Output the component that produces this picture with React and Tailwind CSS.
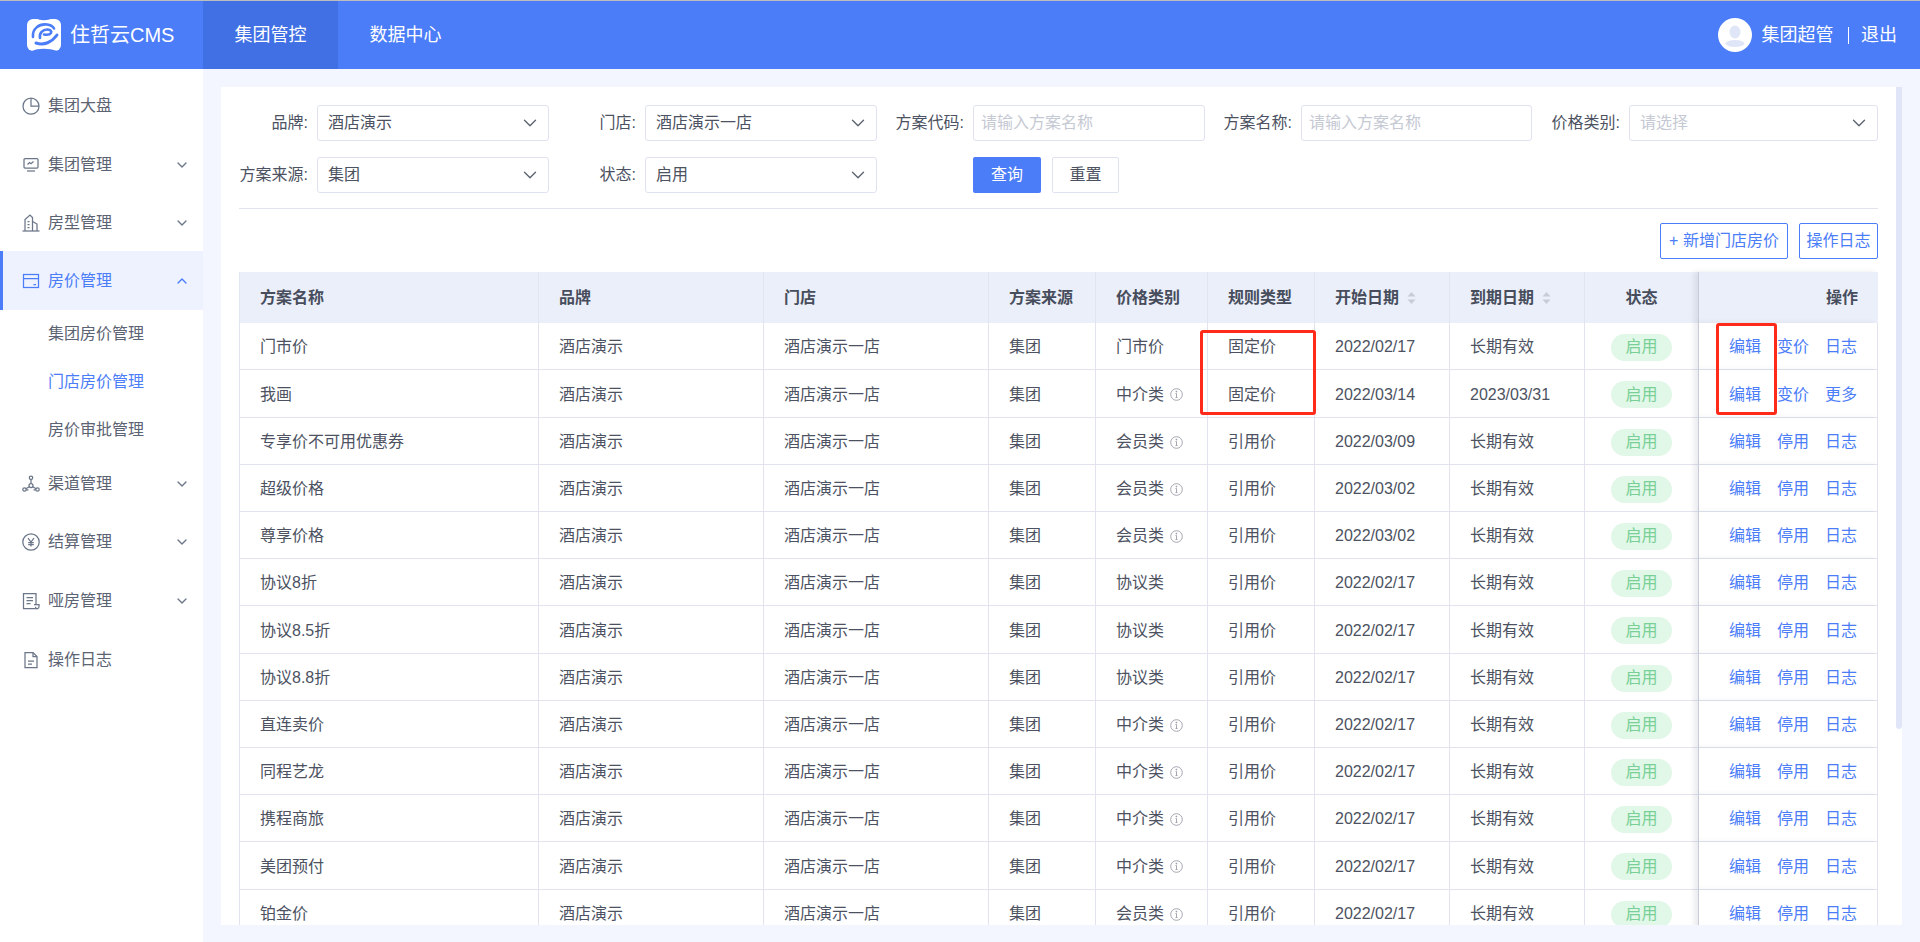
import React from 'react';
import { ChevronDown, ChevronUp } from 'lucide-react';

const rows = [
  { name: '门市价', type: '门市价', rule: '固定价', start: '2022/02/17', end: '长期有效', ops: ['编辑', '变价', '日志'] },
  { name: '我画', type: '中介类', info: true, rule: '固定价', start: '2022/03/14', end: '2023/03/31', ops: ['编辑', '变价', '更多'] },
  { name: '专享价不可用优惠券', type: '会员类', info: true, rule: '引用价', start: '2022/03/09', end: '长期有效' },
  { name: '超级价格', type: '会员类', info: true, rule: '引用价', start: '2022/03/02', end: '长期有效' },
  { name: '尊享价格', type: '会员类', info: true, rule: '引用价', start: '2022/03/02', end: '长期有效' },
  { name: '协议8折', type: '协议类', rule: '引用价', start: '2022/02/17', end: '长期有效' },
  { name: '协议8.5折', type: '协议类', rule: '引用价', start: '2022/02/17', end: '长期有效' },
  { name: '协议8.8折', type: '协议类', rule: '引用价', start: '2022/02/17', end: '长期有效' },
  { name: '直连卖价', type: '中介类', info: true, rule: '引用价', start: '2022/02/17', end: '长期有效' },
  { name: '同程艺龙', type: '中介类', info: true, rule: '引用价', start: '2022/02/17', end: '长期有效' },
  { name: '携程商旅', type: '中介类', info: true, rule: '引用价', start: '2022/02/17', end: '长期有效' },
  { name: '美团预付', type: '中介类', info: true, rule: '引用价', start: '2022/02/17', end: '长期有效' },
  { name: '铂金价', type: '会员类', info: true, rule: '引用价', start: '2022/02/17', end: '长期有效' },
];

const svgProps = {
  width: 18,
  height: 18,
  viewBox: '0 0 18 18',
  fill: 'none',
  stroke: 'currentColor',
  strokeWidth: 1.25,
};

const PieIcon = () => (
  <svg {...svgProps}>
    <circle cx="9" cy="9.2" r="8" />
    <path d="M9 1.2v8h8" />
  </svg>
);

const MonitorIcon = () => (
  <svg {...svgProps}>
    <rect x="2" y="2.5" width="14" height="9.5" rx="1" />
    <path d="M5.5 8.5l2-2 1.5 1.2 2.5-2.2" />
    <path d="M5 15h8" />
  </svg>
);

const BuildingIcon = () => (
  <svg {...svgProps}>
    <path d="M.5 17h17" />
    <path d="M3 17V5.5L8 1l2.5 2.5V17" />
    <path d="M10.5 7.5l4.5 2.5v7" />
    <path d="M5.5 7.5h2M5.5 10.5h2M5.5 13.5h2" />
  </svg>
);

const CardIcon = () => (
  <svg {...svgProps}>
    <rect x="1.5" y="2.5" width="15" height="13" />
    <path d="M1.5 6.5h15M11.5 12.5h2.5" />
  </svg>
);

const NodesIcon = () => (
  <svg {...svgProps}>
    <circle cx="9" cy="2.8" r="1.7" />
    <circle cx="2.5" cy="14.5" r="1.7" />
    <circle cx="15.5" cy="14.5" r="1.7" />
    <circle cx="9" cy="10.5" r="2" />
    <path d="M9 4.5v4M7.3 11.7l-3.4 2M10.7 11.7l3.4 2M4.2 14.8h2.3M11.5 14.8h2.3" />
  </svg>
);

const YenIcon = () => (
  <svg {...svgProps}>
    <circle cx="9" cy="9" r="8.2" />
    <path d="M6 5l3 4 3-4M9 9v4.5M6.2 9.5h5.6M6.2 11.5h5.6" />
  </svg>
);

const ReceiptIcon = () => (
  <svg {...svgProps}>
    <path d="M14 12V1.5H1.5v15H16" />
    <path d="M4.5 5.5h6.5M4.5 8.5h6.5M4.5 11.5h4" />
    <path d="M12 12.5h5v2.2a1.8 1.8 0 0 1-3.6 0" />
  </svg>
);

const FileIcon = () => (
  <svg {...svgProps}>
    <path d="M3 1.5h8l4 4v11H3z" />
    <path d="M11 1.5v4h4M6 10h6M6 13h4" />
  </svg>
);

const menu = [
  { label: '集团大盘', icon: PieIcon },
  { label: '集团管理', icon: MonitorIcon, arrow: true },
  { label: '房型管理', icon: BuildingIcon, arrow: true },
  { label: '房价管理', icon: CardIcon, open: true, children: ['集团房价管理', '门店房价管理', '房价审批管理'] },
  { label: '渠道管理', icon: NodesIcon, arrow: true, low: true },
  { label: '结算管理', icon: YenIcon, arrow: true, low: true },
  { label: '哑房管理', icon: ReceiptIcon, arrow: true, low: true },
  { label: '操作日志', icon: FileIcon, low: true },
];

const Logo = () => (
  <svg width="34" height="34" viewBox="0 0 34 34" fill="none" stroke="#4b7df8" strokeLinecap="round" className="shrink-0">
    <rect x="0" y="1" width="34" height="32" rx="6" fill="#fff" stroke="none" />
    <path d="M9 0c4 3 11 3 17 0z" fill="#4b7df8" stroke="none" />
    <path d="M6 19C5 11 12 5.5 20 6.5c3 .4 6 2 7 4" strokeWidth="2.6" />
    <path d="M13 20c-1-5 3-8.500 7-8.500 3 0 5 1.500 4 3.500-1 1.500-4 2-7 1.500" strokeWidth="2.6" />
    <path d="M9 25c8 3 16-1 21-8" strokeWidth="3" />
    <path d="M5 33c6-3 17-3 25 0z" fill="#4b7df8" stroke="none" />
  </svg>
);

const Avatar = () => (
  <div className="relative flex h-[34px] w-[34px] items-center justify-center overflow-hidden rounded-full bg-white">
    <svg width="34" height="34" viewBox="0 0 34 34">
      <ellipse cx="17" cy="14" rx="5.5" ry="6.5" fill="#dfe6f8" />
      <ellipse cx="17" cy="25.5" rx="9.5" ry="3.5" fill="#dfe6f8" />
    </svg>
  </div>
);

const InfoIcon = () => (
  <svg width="13" height="13" viewBox="0 0 13 13" fill="none" stroke="#9a9ea8" strokeWidth="0.9" className="ml-1.5 shrink-0">
    <circle cx="6.5" cy="6.5" r="5.8" />
    <path d="M6.5 5.5v4M5.5 9.5h2M5.5 5.5h1" />
    <circle cx="6.4" cy="3.6" r="0.5" fill="#9a9ea8" />
  </svg>
);

const SortIcon = () => (
  <svg width="9" height="12" viewBox="0 0 9 12" className="ml-2 shrink-0" fill="#c8ccd6">
    <path d="M4.5 0L8.5 4.5H.5z" />
    <path d="M4.5 12L.5 7.5h8z" />
  </svg>
);

const Label = ({ children }) => (
  <label className="flex-1 whitespace-nowrap pr-[9px] text-right text-[#4c5261]">{children}</label>
);

const Select = ({ value, placeholder, className }) => (
  <div className={`flex h-9 items-center justify-between rounded-[3px] border border-[#dfe3ef] pl-2.5 pr-[7px] ${className}`}>
    <span className={value ? 'text-[#4c5261]' : 'text-[#c5c9d3]'}>{value || placeholder}</span>
    <ChevronDown size={22} strokeWidth={1.5} className="text-[#5d6472]" />
  </div>
);

const TextInput = ({ placeholder, className }) => (
  <input
    placeholder={placeholder}
    className={`h-9 rounded-[3px] border border-[#dfe3ef] px-[7px] outline-none placeholder:text-[#c5c9d3] ${className}`}
  />
);

const Sidebar = () => (
  <aside className="w-[203px] shrink-0 bg-white pt-[7px] text-[#5c6372]">
    {menu.map((item) => {
      const Icon = item.icon;
      return (
        <div key={item.label}>
          <div
            className={`flex items-center pr-[13px] pt-[2px] ${item.low ? 'h-[58.6px]' : 'h-[58.4px]'} ${
              item.open ? 'border-l-[3px] border-[#4b7df8] bg-[#edf2fe] pl-[19px] text-[#4b7df8]' : 'pl-[22px]'
            }`}
          >
            <span className={item.open ? 'text-[#4b7df8]' : 'text-[#6b7688]'}>
              <Icon />
            </span>
            <span className="ml-2 flex-1">{item.label}</span>
            {item.arrow && <ChevronDown size={16} className="text-[#6b7688]" />}
            {item.open && <ChevronUp size={16} className="text-[#4b7df8]" />}
          </div>
          {item.children &&
            item.children.map((child, i) => (
              <div
                key={child}
                className={`flex h-12 items-center pl-12 ${i === 1 ? 'text-[#4b7df8]' : ''}`}
              >
                {child}
              </div>
            ))}
        </div>
      );
    })}
  </aside>
);

const thClass = 'h-[51px] border-r border-[#e1e5f0] pl-5 text-left font-bold text-[#474d5c]';
const tdClass = 'border-r border-b border-[#e1e4ee] pl-5 pt-[2px] text-[#4c5261]';

const PriceTable = () => (
  <div className="relative mt-[13px]">
    <table className="w-[1639px] table-fixed border-separate border-spacing-0">
      <colgroup>
        <col className="w-[300px]" />
        <col className="w-[225px]" />
        <col className="w-[225px]" />
        <col className="w-[107px]" />
        <col className="w-[112px]" />
        <col className="w-[107px]" />
        <col className="w-[135px]" />
        <col className="w-[135px]" />
        <col className="w-[113px]" />
        <col className="w-[180px]" />
      </colgroup>
      <thead className="bg-[#ebeff9]">
        <tr>
          <th className={`${thClass} border-l`}>方案名称</th>
          <th className={thClass}>品牌</th>
          <th className={thClass}>门店</th>
          <th className={thClass}>方案来源</th>
          <th className={thClass}>价格类别</th>
          <th className={thClass}>规则类型</th>
          <th className={thClass}>
            <div className="flex items-center">开始日期<SortIcon /></div>
          </th>
          <th className={thClass}>
            <div className="flex items-center">到期日期<SortIcon /></div>
          </th>
          <th className="h-[51px] text-center font-bold text-[#474d5c]">状态</th>
          <th className="h-[51px] border-l border-[#c9ccd8] pr-5 text-right font-bold text-[#474d5c] shadow-[-4px_0_5px_rgba(60,70,100,0.1)]">
            操作
          </th>
        </tr>
      </thead>
      <tbody>
        {rows.map((row, i) => (
          <tr key={row.name} className={i % 5 === 1 ? 'h-12' : 'h-[47px]'}>
            <td className={`${tdClass} border-l`}>{row.name}</td>
            <td className={tdClass}>酒店演示</td>
            <td className={tdClass}>酒店演示一店</td>
            <td className={tdClass}>集团</td>
            <td className={tdClass}>
              <div className="flex items-center">
                {row.type}
                {row.info && <InfoIcon />}
              </div>
            </td>
            <td className={tdClass}>{row.rule}</td>
            <td className={tdClass}>{row.start}</td>
            <td className={tdClass}>{row.end}</td>
            <td className="border-b border-[#e1e4ee] pt-[2px] text-center">
              <span className="inline-flex h-[27px] w-[61px] items-center justify-center rounded-full bg-[#e1f7e8] text-[#78d096]">
                启用
              </span>
            </td>
            <td className="border-b border-l border-r border-b-[#e1e4ee] border-l-[#c9ccd8] border-r-[#e1e4ee] bg-white pr-5 pt-[2px] shadow-[-4px_0_5px_rgba(60,70,100,0.1)]">
              <div className="flex justify-end gap-4 text-[#4b7df8]">
                {(row.ops || ['编辑', '停用', '日志']).map((op) => (
                  <a key={op} href="#">{op}</a>
                ))}
              </div>
            </td>
          </tr>
        ))}
      </tbody>
    </table>
    {/* red marks drawn over the table */}
    <div className="absolute left-[961px] top-[58px] h-[85px] w-[116px] rounded-[3px] border-[3px] border-[#ff2a1a]" />
    <div className="absolute left-[1477px] top-[51px] h-[92px] w-[61px] rounded-[3px] border-[3px] border-[#ff2a1a]" />
  </div>
);

export default function App() {
  return (
    <div className="flex h-screen flex-col overflow-hidden bg-[#f3f6fe] font-['Liberation_Sans','Noto_Sans_CJK_SC',sans-serif] text-base">
      <header className="flex h-[69px] shrink-0 items-center border-t border-[#bdbdbd] bg-[#4b7df8] text-lg text-white">
        <div className="flex w-[203px] items-center pl-[27px]">
          <Logo />
          <span className="ml-[9px] text-xl">住哲云CMS</span>
        </div>
        <div className="flex h-full w-[135px] items-center justify-center bg-[#4170e4]">集团管控</div>
        <div className="flex h-full w-[135px] items-center justify-center">数据中心</div>
        <div className="ml-auto flex items-center pr-[23px]">
          <Avatar />
          <span className="ml-2.5">集团超管</span>
          <span className="ml-3.5 mr-3 h-[17px] w-[1.5px] bg-white" />
          <span>退出</span>
        </div>
      </header>

      <div className="flex min-h-0 flex-1">
        <Sidebar />
        <main className="relative mb-[17px] ml-[18px] mr-[18px] mt-[18px] flex-1 overflow-hidden bg-white pl-[18px] pr-6 pt-[18px]">
          <div className="grid grid-cols-[310px_328px_328px_327px_346px] gap-y-4 border-b border-[#e1e4ee] pb-[15px]">
            <div className="flex items-center">
              <Label>品牌:</Label>
              <Select value="酒店演示" className="w-[232px]" />
            </div>
            <div className="flex items-center">
              <Label>门店:</Label>
              <Select value="酒店演示一店" className="w-[232px]" />
            </div>
            <div className="flex items-center">
              <Label>方案代码:</Label>
              <TextInput placeholder="请输入方案名称" className="w-[232px]" />
            </div>
            <div className="flex items-center">
              <Label>方案名称:</Label>
              <TextInput placeholder="请输入方案名称" className="w-[231px]" />
            </div>
            <div className="flex items-center">
              <Label>价格类别:</Label>
              <Select placeholder="请选择" className="w-[249px]" />
            </div>
            <div className="flex items-center">
              <Label>方案来源:</Label>
              <Select value="集团" className="w-[232px]" />
            </div>
            <div className="flex items-center">
              <Label>状态:</Label>
              <Select value="启用" className="w-[232px]" />
            </div>
            <div className="col-span-2 flex items-center gap-[11px] pl-24">
              <button className="h-9 w-[68px] rounded-[2px] bg-[#4b7df8] text-white">查询</button>
              <button className="h-9 w-[67px] rounded-[2px] border border-[#dfe3ef] text-[#4c5261]">重置</button>
            </div>
          </div>

          <div className="mt-[14px] flex justify-end gap-[11px] text-[#4b7df8]">
            <button className="h-9 w-32 rounded-[2px] border border-[#4b7df8]">+ 新增门店房价</button>
            <button className="h-9 w-[79px] rounded-[2px] border border-[#4b7df8]">操作日志</button>
          </div>

          <PriceTable />

          {/* page scrollbar thumb */}
          <div className="absolute right-0 top-0 h-[642px] w-1.5 rounded-b-[3px] bg-[#e0e6f7]" />
        </main>
      </div>
    </div>
  );
}
